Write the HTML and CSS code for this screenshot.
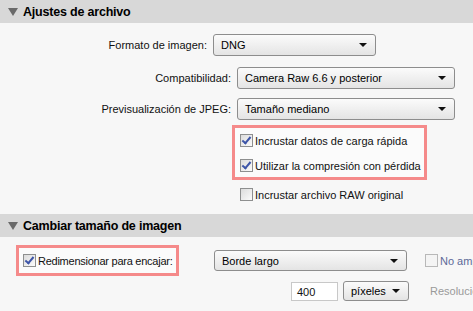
FILE: index.html
```html
<!DOCTYPE html>
<html lang="es">
<head>
    <meta charset="UTF-8">
    <title>Ajustes de exportación</title>
    <link rel="stylesheet" href="styles.css">
</head>
<body>
    <div class="panel">
        <div class="section-header">
            <span class="twisty"></span>
            <span class="section-title">Ajustes de archivo</span>
        </div>
        <div class="section-body">
            <div class="row row-format">
                <label class="row-label">Formato de imagen:</label>
                <div class="select select-format"><span>DNG</span><i class="arrow"></i></div>
            </div>
            <div class="row row-wide">
                <label class="row-label">Compatibilidad:</label>
                <div class="select select-wide"><span>Camera Raw 6.6 y posterior</span><i class="arrow"></i></div>
            </div>
            <div class="row row-wide row-jpeg">
                <label class="row-label">Previsualización de JPEG:</label>
                <div class="select select-wide"><span>Tamaño mediano</span><i class="arrow"></i></div>
            </div>

            <div class="highlight highlight-checks">
                <div class="check-row">
                    <span class="checkbox checked"></span>
                    <span>Incrustar datos de carga rápida</span>
                </div>
                <div class="check-row">
                    <span class="checkbox checked"></span>
                    <span>Utilizar la compresión con pérdida</span>
                </div>
            </div>
            <div class="check-row check-raw">
                <span class="checkbox"></span>
                <span>Incrustar archivo RAW original</span>
            </div>
        </div>

        <div class="section-header">
            <span class="twisty"></span>
            <span class="section-title">Cambiar tamaño de imagen</span>
        </div>
        <div class="section-body resize-body">
            <div class="resize-row">
                <div class="highlight highlight-resize">
                    <div class="check-row">
                        <span class="checkbox checked"></span>
                        <span class="resize-label">Redimensionar para encajar:</span>
                    </div>
                </div>
                <div class="select select-edge"><span>Borde largo</span><i class="arrow"></i></div>
                <div class="check-row disabled">
                    <span class="checkbox"></span>
                    <span>No ampliar</span>
                </div>
            </div>
            <div class="size-row">
                <div class="text-input">400</div>
                <div class="select select-unit"><span>píxeles</span><i class="arrow"></i></div>
                <span class="muted">Resolución:</span>
            </div>
        </div>
    </div>
</body>
</html>
```

FILE: styles.css
```css
* {
    margin: 0;
    padding: 0;
    box-sizing: border-box;
}

body {
    background: #f7f7f7;
    font-family: 'Liberation Sans', Arial, sans-serif;
    font-size: 11px;
    color: #111;
    overflow: hidden;
    white-space: nowrap;
}

.panel {
    width: 473px;
}

.section-header {
    display: flex;
    align-items: center;
    height: 23px;
    background: #d8d8d8;
    padding-left: 8px;
}

.twisty {
    width: 0;
    height: 0;
    border-left: 5px solid transparent;
    border-right: 5px solid transparent;
    border-top: 8px solid #6a6a6a;
    margin-right: 5px;
}

.section-title {
    font-size: 12.5px;
    font-weight: bold;
    letter-spacing: -0.2px;
    color: #000;
}

.section-body {
    padding: 11px 0 12px;
}

.row {
    display: flex;
    align-items: center;
    gap: 6px;
    margin-bottom: 11px;
}

.row-label {
    flex-shrink: 0;
    text-align: right;
}

.row-format .row-label {
    width: 207px;
}

.row-wide {
    margin-bottom: 9px;
}

.row-wide .row-label {
    width: 231px;
}

.row-jpeg {
    margin-bottom: 5px;
}

.select {
    display: flex;
    flex-shrink: 0;
    align-items: center;
    justify-content: space-between;
    height: 22px;
    padding: 0 8px 0 7px;
    border: 1px solid #8d8d8d;
    border-radius: 3px;
    background: linear-gradient(#fbfbfb, #e4e4e4);
    color: #000;
}

.arrow {
    width: 0;
    height: 0;
    border-left: 4px solid transparent;
    border-right: 4px solid transparent;
    border-top: 4px solid #111;
}

.select-format {
    width: 163px;
}

.select-wide {
    width: 218px;
}

.select-edge {
    width: 193px;
    height: 21px;
    margin-left: 35px;
}

.select-unit {
    width: 66px;
    height: 20px;
    margin-left: 5px;
}

.highlight {
    flex-shrink: 0;
    border: 3px solid #f58a8a;
    background: #fbfbfb;
}

.highlight-checks {
    width: 195px;
    margin-left: 232px;
    padding: 5px 0 4px 5px;
}

.highlight-checks .check-row + .check-row {
    margin-top: 10px;
}

.check-row {
    display: flex;
    flex-shrink: 0;
    align-items: center;
    height: 15px;
}

.check-raw {
    margin: 7px 0 0 240px;
}

.checkbox {
    width: 13px;
    height: 13px;
    flex-shrink: 0;
    margin-right: 2px;
    border: 1px solid #8e8f8f;
    background: linear-gradient(135deg, #dcdcdc, #fbfbfb);
    position: relative;
}

.checkbox.checked::after {
    content: "";
    position: absolute;
    left: 3px;
    top: 0px;
    width: 3px;
    height: 7px;
    border-right: 2px solid #3d55a8;
    border-bottom: 2px solid #3d55a8;
    transform: rotate(40deg);
}

.resize-body {
    padding: 8px 0 0;
}

.resize-row {
    display: flex;
    align-items: center;
}

.highlight-resize {
    width: 163px;
    height: 31px;
    margin-left: 16px;
    padding: 0 0 0 4px;
    display: flex;
    align-items: center;
}

.resize-label {
    letter-spacing: -0.25px;
}

.disabled {
    margin-left: 18px;
    color: #5d6a99;
}

.disabled .checkbox {
    border-color: #b8b8b8;
    background: #f4f4f4;
}

.size-row {
    display: flex;
    align-items: center;
    margin: 5px 0 0 291px;
}

.text-input {
    width: 47px;
    height: 19px;
    flex-shrink: 0;
    padding: 3px 0 0 5px;
    border: 1px solid #c8c8c8;
    background: #fff;
}

.muted {
    margin-left: 21px;
    color: #9a9a9a;
}
```
